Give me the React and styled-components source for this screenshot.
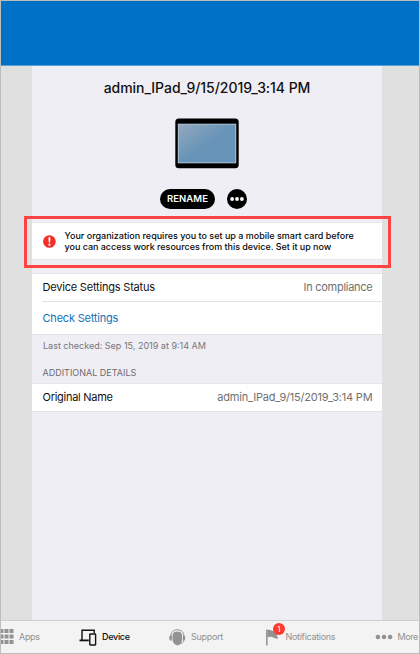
import React from "react";
import styled, { createGlobalStyle } from "styled-components";

const Global = createGlobalStyle`
  * { box-sizing: border-box; }
  body { margin: 0; font-family: Inter, "Liberation Sans", sans-serif; }
`;

const Screen = styled.div`
  width: 420px;
  height: 654px;
  border: 1px solid #bdbdbd;
  background: #e0e0e0;
  display: flex;
  flex-direction: column;
  overflow: hidden;
`;

const Header = styled.header`
  height: 65px;
  flex: none;
  background: #0072c6;
  border-bottom: 1px solid #5a9fd6;
`;

const Panel = styled.main`
  width: 350px;
  margin-left: 31px;
  flex: 1;
  min-height: 0;
  background: #efeef4;
  display: flex;
  flex-direction: column;
`;

const Text = styled.span`
  font-size: ${(p) => p.$size}px;
  font-weight: ${(p) => p.$weight || 400};
  letter-spacing: ${(p) => p.$track || 0}px;
  color: ${(p) => p.$color || "#111"};
  line-height: 1.2;
  white-space: nowrap;
`;

const Summary = styled.section`
  height: 157px;
  display: flex;
  flex-direction: column;
  align-items: center;
`;

const Title = styled.h1`
  margin: 11px 0 0;
  height: 21px;
  font-size: 14px;
  font-weight: 500;
  line-height: 21px;
  letter-spacing: -0.04px;
  color: #111;
  white-space: nowrap;
`;

const Tablet = styled.svg`
  display: block;
  margin-top: 20px;
  flex: none;
`;

const Actions = styled.div`
  display: flex;
  gap: 12px;
  margin: 20px 0 0 -7px;
`;

const Pill = styled.button`
  width: 55px;
  height: 20px;
  padding: 0;
  border: 0;
  border-radius: 10px;
  background: #000;
  color: #fff;
  font: 600 9.5px/20px Inter, sans-serif;
  letter-spacing: 0.1px;
`;

const Round = styled.button`
  width: 20px;
  height: 20px;
  padding: 0;
  border: 0;
  border-radius: 50%;
  background: #000;
  display: flex;
  align-items: center;
  justify-content: center;
`;

const Alert = styled.section`
  position: relative;
  height: 36px;
  flex: none;
  background: #fff;
  display: flex;
  align-items: center;
  padding-left: 11px;
  gap: 8.5px;
  box-shadow: 0 -1px 0 #e9e8ed, 0 1px 0 #e7e6eb;
`;

const Highlight = styled.div`
  position: absolute;
  left: -8px;
  top: -7px;
  width: 367px;
  height: 52px;
  border: 3px solid #fd4444;
`;

const Message = styled.p`
  margin: 0;
  font-size: 9px;
  font-weight: 500;
  line-height: 11px;
  color: #0a0a0a;
  white-space: nowrap;
`;

const Line = styled.span`
  display: block;
  letter-spacing: ${(p) => p.$track}px;
`;

const Card = styled.section`
  margin-top: ${(p) => p.$top}px;
  flex: none;
  background: #fff;
  box-shadow: 0 -1px 0 #e6e5ea, 0 1px 0 #e3e2e7;
`;

const Row = styled.div`
  height: ${(p) => p.$height}px;
  margin-left: 10px;
  padding: ${(p) => p.$drop || 0}px 9.6px 0 0.5px;
  display: flex;
  align-items: center;
  justify-content: space-between;
  border-bottom: ${(p) => (p.$divided ? "1px solid #e2e2e4" : "0")};
`;

const Note = styled.div`
  height: 24px;
  padding-left: 11px;
  display: flex;
  align-items: center;
`;

const SectionHeading = styled.div`
  height: 26px;
  padding: 4px 0 0 10.5px;
  display: flex;
  align-items: center;
`;

const TabBar = styled.nav`
  height: 33px;
  flex: none;
  background: #f3f3f3;
  border-top: 1px solid #cecdd1;
  display: grid;
  grid-template-columns: 78px 90px 96px 110px 44px;
`;

const Tab = styled.div`
  position: relative;
  display: flex;
  align-items: center;
  gap: ${(p) => p.$gap}px;
  color: ${(p) => (p.$active ? "#111" : "#929292")};
  svg { display: block; flex: none; }
`;

const Badge = styled.span`
  position: absolute;
  left: 8px;
  top: 2px;
  width: 12px;
  height: 12px;
  border-radius: 50%;
  background: #ff3b30;
  color: #fff;
  font-size: 8px;
  line-height: 12px;
  text-align: center;
`;

const GridIcon = () => (
  <svg width="13" height="16" viewBox="0 0 13 16" fill="#929292">
    {[0, 5.5, 11].map((y) => (
      <g key={y}>
        <rect x="-1" y={y} width="3.5" height="4" />
        <rect x="3.5" y={y} width="4" height="4" />
        <rect x="8.5" y={y} width="4" height="4" />
      </g>
    ))}
  </svg>
);

const DeviceIcon = () => (
  <svg width="18" height="17" viewBox="0 0 18 17" fill="none" stroke="#111" strokeWidth="1.4">
    <path d="M3 11V1.2H15.2V4" />
    <path d="M0.5 11.4H9.8" strokeWidth="1.8" />
    <rect x="10.8" y="5" width="5.8" height="11" rx="0.4" />
  </svg>
);

const SupportIcon = () => (
  <svg width="17" height="17" viewBox="0 0 17 17" fill="#929292">
    <path d="M3.5 7C3.5 3.8 5.3 2.5 8.3 2.5S13.2 3.8 13.2 7V10C13.2 13.3 11 15.8 8.8 16.3H7.9C5.7 15.8 3.5 13.3 3.5 10Z" />
    <path d="M1.8 8C1.5 3.3 4.2 0.8 8.3 0.8S15.2 3.3 14.9 8" fill="none" stroke="#929292" strokeWidth="1" />
    <path d="M2.8 6.3C1.1 6.3 0.2 7.4 0.2 9S1.1 11.8 2.8 11.8ZM14 6.3C15.5 6.3 16.3 7.4 16.3 9S15.5 11.8 14 11.8Z" />
    <path d="M14.9 11C14.7 13.3 13 14.7 10 15" fill="none" stroke="#929292" strokeWidth="0.9" />
  </svg>
);

const FlagIcon = () => (
  <svg width="14" height="17" viewBox="0 0 14 17" fill="#929292">
    <path d="M1.1 0.5H2.6V16.5H1.1Z" />
    <path d="M2.4 1C4.5 0 6.3 1.5 8 2H13.8L11.8 6L13.2 9.6C9.2 10 8.2 7.8 5.8 7.8C4.3 7.8 3.3 8.1 2.4 8.6Z" />
  </svg>
);

const Dots = ({ width, radius, color, gap }) => (
  <svg width={width} height="6" viewBox={`0 0 ${width} 6`} fill={color}>
    {[-1, 0, 1].map((i) => (
      <circle key={i} cx={width / 2 + i * gap} cy="3" r={radius} />
    ))}
  </svg>
);

export default function App() {
  return (
    <>
      <Global />
      <Screen>
        <Header />
        <Panel>
          <Summary>
            <Title>admin_IPad_9/15/2019_3:14 PM</Title>
            <Tablet width="64" height="51" viewBox="0 0 64 51">
              <defs>
                <linearGradient id="glass" x1="0" y1="0" x2="1" y2="1">
                  <stop offset="0" stopColor="#94a9bd" />
                  <stop offset="0.5" stopColor="#6894b8" />
                  <stop offset="1" stopColor="#6894ba" />
                </linearGradient>
              </defs>
              <rect x="0.3" y="0.5" width="63.4" height="49.8" rx="3.5" fill="#000" />
              <rect x="3.3" y="6.2" width="57.4" height="38.6" fill="url(#glass)" stroke="#b4ccdf" strokeWidth="1" />
            </Tablet>
            <Actions>
              <Pill>RENAME</Pill>
              <Round aria-label="More actions">
                <Dots width={16} radius={1.9} color="#fff" gap={4.9} />
              </Round>
            </Actions>
          </Summary>
          <Alert>
            <svg width="13" height="13" viewBox="0 0 13 13">
              <circle cx="6.4" cy="6.5" r="6.3" fill="#f52f27" />
              <path d="M5.4 2.3H7.4L7.1 7.5H5.7Z" fill="#fff" />
              <circle cx="6.4" cy="9.7" r="1.1" fill="#fff" />
            </svg>
            <Message>
              <Line $track={0}>Your organization requires you to set up a mobile smart card before</Line>
              <Line $track={-0.03}>you can access work resources from this device. Set it up now</Line>
            </Message>
            <Highlight />
          </Alert>
          <Card $top={15}>
            <Row $height={28} $divided>
              <Text $size={11} $track={-0.2}>Device Settings Status</Text>
              <Text $size={11} $track={-0.28} $color="#707070">In compliance</Text>
            </Row>
            <Row $height={32} $drop={1}>
              <Text $size={11} $track={-0.2} $color="#1572b5">Check Settings</Text>
            </Row>
          </Card>
          <Note>
            <Text $size={9} $color="#77767b">Last checked: Sep 15, 2019 at 9:14 AM</Text>
          </Note>
          <SectionHeading>
            <Text $size={9} $color="#6c6b70">ADDITIONAL DETAILS</Text>
          </SectionHeading>
          <Card $top={0}>
            <Row $height={27}>
              <Text $size={11} $track={-0.27}>Original Name</Text>
              <Text $size={11} $track={-0.21} $color="#707070">admin_IPad_9/15/2019_3:14 PM</Text>
            </Row>
          </Card>
        </Panel>
        <TabBar>
          <Tab $gap={5}><GridIcon /><Text $size={9} $track={-0.3} $color="#929292">Apps</Text></Tab>
          <Tab $gap={5}><DeviceIcon /><Text $size={9} $track={-0.3} $weight={500}>Device</Text></Tab>
          <Tab $gap={5}><SupportIcon /><Text $size={9} $track={-0.3} $color="#929292">Support</Text></Tab>
          <Tab $gap={6.5}><FlagIcon /><Badge>1</Badge><Text $size={9} $track={-0.3} $color="#929292">Notifications</Text></Tab>
          <Tab $gap={4.5}><Dots width={18} radius={2.3} color="#929292" gap={6.1} /><Text $size={9} $track={-0.4} $color="#929292">More</Text></Tab>
        </TabBar>
      </Screen>
    </>
  );
}
